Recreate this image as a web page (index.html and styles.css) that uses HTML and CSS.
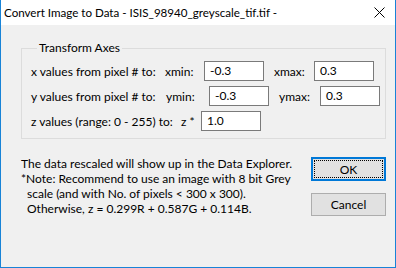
FILE: index.html
```html
<!DOCTYPE html>
<html>
<head>
<meta charset="utf-8">
<link rel="stylesheet" href="styles.css">
</head>
<body>
<div class="window">
  <div class="titlebar">
    <span class="title">Convert Image to Data - ISIS_98940_greyscale_tif.tif -</span>
    <svg class="close" width="11" height="11" viewBox="0 0 11 11"><path d="M0.5 0.5 L10.5 10.5 M10.5 0.5 L0.5 10.5" stroke="#000" stroke-width="1" fill="none"/></svg>
  </div>
  <div class="client">
    <fieldset class="group">
      <legend class="legend">Transform Axes</legend>
      <div class="row">
        <span class="lbl w1">x values from pixel # to:</span>
        <span class="lbl w2">xmin:</span>
        <span class="box">-0.3</span>
        <span class="lbl w3">xmax:</span>
        <span class="box">0.3</span>
      </div>
      <div class="row">
        <span class="lbl w4">y values from pixel # to:</span>
        <span class="lbl w5">ymin:</span>
        <span class="box">-0.3</span>
        <span class="lbl w6">ymax:</span>
        <span class="box">0.3</span>
      </div>
      <div class="row">
        <span class="lbl w7">z values (range: 0 - 255) to:</span>
        <span class="lbl w8">z *</span>
        <span class="box">1.0</span>
      </div>
    </fieldset>
    <div class="bottom">
      <div class="note">
        <div>The data rescaled will show up in the Data Explorer.</div>
        <div>*Note: Recommend to use an image with 8 bit Grey</div>
        <div class="indent">scale (and with No. of pixels &lt; 300 x 300).</div>
        <div class="indent">Otherwise, z = 0.299R + 0.587G + 0.114B.</div>
      </div>
      <div class="buttons">
        <div class="btn default"><span class="focus">OK</span></div>
        <div class="btn">Cancel</div>
      </div>
    </div>
  </div>
</div>
</body>
</html>
```
FILE: styles.css
```css
* { box-sizing: border-box; }
html, body { margin: 0; padding: 0; }
body {
  font-family: Lato, "Noto Sans", sans-serif;
  font-size: 12px;
  color: #000;
  background: #f0f0f0;
}
.window {
  width: 396px;
  height: 268px;
  border: 1px solid #1883d7;
  border-top: none;
  background: #f0f0f0;
  display: flex;
  flex-direction: column;
}
.titlebar {
  height: 25px;
  background: #fff;
  display: flex;
  align-items: center;
  justify-content: space-between;
  padding: 0 10px 0 3px;
  flex: none;
}
.title { font-size: 11.6px; line-height: 16px; }
.close { display: block; }
.client {
  padding: 15px 9px 0 20px;
}
.group {
  margin: 0;
  padding: 5px 0 7px 9px;
  border: 1px solid #dcdcdc;
  width: 365px;
  display: flex;
  flex-direction: column;
  gap: 5px;
}
.legend {
  padding: 0 2px;
  margin-left: 6px;
  line-height: 16px;
}
.row {
  display: flex;
  align-items: center;
  height: 20px;
}
.lbl { flex: none; white-space: nowrap; }
.w1 { width: 134px; }
.w2 { width: 39px; }
.w3 { width: 50px; padding-left: 10px; }
.w4 { width: 135px; }
.w5 { width: 43px; }
.w6 { width: 51px; padding-left: 10px; }
.w7 { width: 150px; }
.w8 { width: 20px; }
.box {
  flex: none;
  width: 60px;
  height: 20px;
  background: #fff;
  border: 1px solid #7a7a7a;
  padding-left: 5px;
  line-height: 18px;
}
.bottom {
  display: flex;
  justify-content: space-between;
  margin-top: 14px;
}
.note {
  line-height: 15px;
  padding-top: 3px;
}
.indent { padding-left: 6px; }
.buttons {
  display: flex;
  flex-direction: column;
  gap: 12px;
  padding-top: 4px;
}
.btn {
  width: 75px;
  height: 23px;
  background: #e1e1e1;
  border: 1px solid #adadad;
  display: flex;
  align-items: center;
  justify-content: center;
}
.btn.default {
  height: 24px;
  border: 2px solid #0078d7;
  padding: 1px;
}
.focus {
  width: 100%;
  height: 100%;
  border: 1px dotted #000;
  display: flex;
  align-items: center;
  justify-content: center;
}
```
